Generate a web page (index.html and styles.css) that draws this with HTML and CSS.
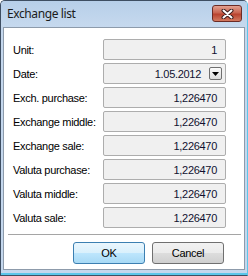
FILE: index.html
```html
<!DOCTYPE html>
<html lang="en">
<head>
  <meta charset="UTF-8">
  <title>Exchange list</title>
  <link rel="stylesheet" href="styles.css">
</head>
<body>
  <div class="window">
    <div class="titlebar">
      <span class="title">Exchange list</span>
      <button class="close" type="button">
        <svg width="13" height="10" viewBox="0 0 13 10">
          <path d="M2.5 1.5 L10.5 8.5 M10.5 1.5 L2.5 8.5" stroke="#3a1c1c" stroke-width="4" stroke-linecap="round"/>
          <path d="M2.5 1.5 L10.5 8.5 M10.5 1.5 L2.5 8.5" stroke="#ffffff" stroke-width="2" stroke-linecap="round"/>
        </svg>
      </button>
    </div>

    <div class="client">
      <div class="fields">
        <label>Unit:</label>
        <div class="field">1</div>

        <label>Date:</label>
        <div class="field date">
          <span>1.05.2012</span>
          <span class="drop">
            <svg width="7" height="4" viewBox="0 0 7 4"><path d="M0 0 H7 L3.5 4 Z" fill="#000"/></svg>
          </span>
        </div>

        <label>Exch. purchase:</label>
        <div class="field">1,226470</div>

        <label>Exchange middle:</label>
        <div class="field">1,226470</div>

        <label>Exchange sale:</label>
        <div class="field">1,226470</div>

        <label>Valuta purchase:</label>
        <div class="field">1,226470</div>

        <label>Valuta middle:</label>
        <div class="field">1,226470</div>

        <label>Valuta sale:</label>
        <div class="field">1,226470</div>
      </div>

      <div class="sep"></div>

      <div class="buttons">
        <button class="btn default" type="button">OK</button>
        <button class="btn" type="button">Cancel</button>
      </div>
    </div>
  </div>
</body>
</html>
```

FILE: styles.css
```css
body {
  margin: 0;
  padding: 0;
  background: #ffffff;
  font-family: "Liberation Sans", Arial, sans-serif;
  font-size: 11px;
  letter-spacing: -0.3px;
  color: #000;
}
.window {
  box-sizing: border-box;
  width: 248px;
  height: 276px;
  border: 1px solid #3e4e62;
  border-right-color: #5ac6ea;
  border-radius: 5px 5px 0 0;
  background: #c4d7ed;
  box-shadow: inset 0 -2px 0 #5ac6ea;
  display: flex;
  flex-direction: column;
}
.titlebar {
  height: 26px;
  display: flex;
  align-items: flex-start;
  justify-content: space-between;
  padding: 0 5px 0 6px;
  background: linear-gradient(#b7cfe9, #c6d9ee);
  border-radius: 4px 4px 0 0;
}
.title {
  font-family: "Noto Sans", sans-serif;
  font-size: 12px;
  letter-spacing: -0.4px;
  line-height: 26px;
  color: #1b1b1b;
}
.close {
  margin-top: 4px;
  width: 30px;
  height: 17px;
  padding: 0;
  border: 1px solid #6b2b25;
  border-radius: 3px;
  background: linear-gradient(#e3a191, #c96450 45%, #b9432f 55%, #d37a60);
  display: flex;
  align-items: center;
  justify-content: center;
}
.close svg {
  display: block;
}
.client {
  height: 243px;
  box-sizing: border-box;
  margin: 0 2px;
  border: 1px solid #8d9bab;
  background: #ffffff;
  padding-top: 11px;
}
.fields {
  display: grid;
  grid-template-columns: 90px 123px;
  grid-auto-rows: 21px;
  row-gap: 3px;
  padding-left: 9px;
}
.fields label {
  display: flex;
  align-items: center;
  white-space: nowrap;
}
.field {
  box-sizing: border-box;
  border: 1px solid #adadad;
  border-radius: 2px;
  background: #f0f0f0;
  display: flex;
  align-items: center;
  justify-content: flex-end;
  padding-right: 8px;
  color: #101030;
}
.field.date {
  padding-right: 3px;
}
.drop {
  box-sizing: border-box;
  width: 13px;
  height: 13px;
  margin-left: 8px;
  border: 1px solid #6f6f6f;
  border-radius: 2px;
  background: linear-gradient(#fbfbfb, #dcdcdc);
  display: flex;
  align-items: center;
  justify-content: center;
}
.drop svg {
  display: block;
}
.sep {
  height: 1px;
  margin: 6px 3px 0 4px;
  background: #a5a5a5;
}
.buttons {
  display: flex;
  justify-content: flex-end;
  gap: 7px;
  padding: 7px 20px 0 0;
}
.btn {
  width: 72px;
  height: 22px;
  padding: 0;
  font-family: "Liberation Sans", Arial, sans-serif;
  font-size: 11px;
  letter-spacing: -0.3px;
  color: #000;
  border: 1px solid #707070;
  border-radius: 3px;
  background: linear-gradient(#f2f2f2, #ebebeb 50%, #dddddd 50%, #cfcfcf);
}
.btn.default {
  border-color: #3c7fb1;
  background: linear-gradient(#eaf6fd, #d9f0fc 50%, #bee6fd 50%, #a7d9f5);
}
```
